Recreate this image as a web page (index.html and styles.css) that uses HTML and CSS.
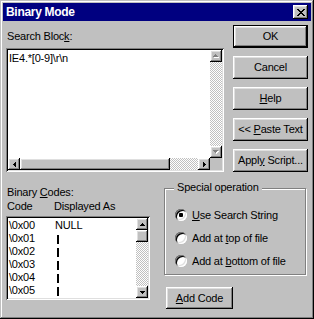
FILE: index.html
```html
<!DOCTYPE html>
<html lang="en">
<head>
    <meta charset="UTF-8">
    <title>Binary Mode</title>
    <link rel="stylesheet" href="styles.css">
</head>
<body>
    <div class="window">
        <div class="titlebar">
            <span class="title">Binary Mode</span>
            <span class="close raised">
                <svg width="8" height="7" viewBox="0 0 8 7"><path d="M0 0h2v1H0zM6 0h2v1H6zM1 1h2v1H1zM5 1h2v1H5zM2 2h4v1H2zM3 3h2v1H3zM2 4h4v1H2zM1 5h2v1H1zM5 5h2v1H5zM0 6h2v1H0zM6 6h2v1H6z"/></svg>
            </span>
        </div>

        <div class="body">
            <div class="top">
                <div class="search">
                    <div class="label">Search Bloc<u>k</u>:</div>
                    <div class="sunken edit">
                        <div class="edit-text">IE4.*[0-9]\r\n</div>
                        <div class="vscroll">
                            <div class="sbtn raised">
                                <svg width="6" height="4" viewBox="0 0 6 4"><path fill="#fff" d="M3 1h1v1H3zM2 2h3v1H2zM1 3h5v1H1z"/><path fill="#808080" d="M2 0h1v1H2zM1 1h3v1H1zM0 2h5v1H0z"/></svg>
                            </div>
                            <div class="track"></div>
                            <div class="sbtn raised">
                                <svg width="6" height="4" viewBox="0 0 6 4"><path fill="#fff" d="M1 1h5v1H1zM2 2h3v1H2zM3 3h1v1H3z"/><path fill="#808080" d="M0 0h5v1H0zM1 1h3v1H1zM2 2h1v1H2z"/></svg>
                            </div>
                        </div>
                        <div class="hscroll">
                            <div class="sbtn raised">
                                <svg width="3" height="5" viewBox="0 0 3 5"><path d="M0 2h1v1H0zM1 1h1v3H1zM2 0h1v5H2z"/></svg>
                            </div>
                            <div class="hthumb raised"></div>
                            <div class="track"></div>
                            <div class="sbtn raised">
                                <svg width="3" height="5" viewBox="0 0 3 5"><path d="M0 0h1v5H0zM1 1h1v3H1zM2 2h1v1H2z"/></svg>
                            </div>
                        </div>
                        <div class="corner"></div>
                    </div>
                </div>

                <div class="buttons">
                    <div class="btn raised default"><span>OK</span></div>
                    <div class="btn raised"><span>Cancel</span></div>
                    <div class="btn raised"><span><u>H</u>elp</span></div>
                    <div class="btn raised"><span>&lt;&lt; <u>P</u>aste Text</span></div>
                    <div class="btn raised"><span>Appl<u>y</u> Script...</span></div>
                </div>
            </div>

            <div class="bottom">
                <div class="codes">
                    <div class="label-sm">Binary <u>C</u>odes:</div>
                    <div class="label-sm cols"><span class="col-code">Code</span><span>Displayed As</span></div>
                    <div class="sunken listbox">
                        <div class="rows">
                            <div class="row"><span class="col-code">\0x00</span><span>NULL</span></div>
                            <div class="row"><span class="col-code">\0x01</span><span class="bar"></span></div>
                            <div class="row"><span class="col-code">\0x02</span><span class="bar"></span></div>
                            <div class="row"><span class="col-code">\0x03</span><span class="bar"></span></div>
                            <div class="row"><span class="col-code">\0x04</span><span class="bar"></span></div>
                            <div class="row"><span class="col-code">\0x05</span><span class="bar"></span></div>
                        </div>
                        <div class="vscroll">
                            <div class="sbtn raised">
                                <svg width="5" height="3" viewBox="0 0 5 3"><path d="M2 0h1v1H2zM1 1h3v1H1zM0 2h5v1H0z"/></svg>
                            </div>
                            <div class="vthumb raised"></div>
                            <div class="track"></div>
                            <div class="sbtn raised">
                                <svg width="5" height="3" viewBox="0 0 5 3"><path d="M0 0h5v1H0zM1 1h3v1H1zM2 2h1v1H2z"/></svg>
                            </div>
                        </div>
                    </div>
                </div>

                <div class="special">
                    <div class="group">
                        <div class="group-title">Special operation</div>
                        <div class="options">
                            <div class="option"><span class="radio checked"></span><span><u>U</u>se Search String</span></div>
                            <div class="option"><span class="radio"></span><span>Add at <u>t</u>op of file</span></div>
                            <div class="option"><span class="radio"></span><span>Add at <u>b</u>ottom of file</span></div>
                        </div>
                    </div>
                    <div class="btn raised add"><span><u>A</u>dd Code</span></div>
                </div>
            </div>
        </div>
    </div>
</body>
</html>
```

FILE: styles.css
```css
* { box-sizing: border-box; }
body { margin: 0; background: #c0c0c0; font-family: "Liberation Sans", Arial, sans-serif; font-size: 11px; letter-spacing: -0.2px; color: #000; }
u { text-decoration-thickness: 1px; text-underline-offset: 1px; }

/* window frame */
.window { width: 314px; height: 319px; padding: 3px; background: #c0c0c0;
    box-shadow: inset -1px -1px #000, inset 1px 1px #c0c0c0, inset -2px -2px #808080, inset 2px 2px #fff; }
.titlebar { height: 18px; display: flex; align-items: center; padding: 0 3px; background: #000080; color: #fff; }
.title { font-weight: bold; font-size: 12px; letter-spacing: -0.3px; }
.close { width: 15px; height: 14px; margin-left: auto; display: flex; align-items: center; justify-content: center; padding-left: 1px; }

/* bevels */
.raised { background: #c0c0c0; box-shadow: inset -1px -1px #000, inset 1px 1px #fff, inset -2px -2px #808080, inset 2px 2px #dfdfdf; }
.sunken { background: #fff; padding: 2px; box-shadow: inset 1px 1px #808080, inset -1px -1px #fff, inset 2px 2px #000, inset -2px -2px #dfdfdf; }

.body { padding: 4px 3px 0 3px; }
.top { display: flex; gap: 9px; }
.search { width: 218px; padding-top: 5px; }
.label { line-height: 13px; margin: 0 0 5px 1px; }

/* edit box with scrollbars */
.edit { height: 124px; display: grid; grid-template-columns: 1fr 12px; grid-template-rows: 1fr 12px; }
.edit-text { padding: 2px 0 0 1px; line-height: 13px; }
.vscroll { display: flex; flex-direction: column; }
.hscroll { display: flex; }
.sbtn { width: 12px; height: 12px; flex: none; display: flex; align-items: center; justify-content: center; }
.sbtn svg { display: block; }
.track { flex: 1; background: repeating-conic-gradient(#fff 0 25%, #c0c0c0 0 50%) 0 0 / 2px 2px; }
.hthumb { width: 150px; height: 12px; flex: none; }
.vthumb { width: 12px; height: 12px; flex: none; }
.corner { background: #c0c0c0; }

/* right-hand buttons */
.buttons { width: 75px; display: flex; flex-direction: column; gap: 8px; }
.btn { height: 23px; display: flex; align-items: center; justify-content: center; padding-bottom: 1px; white-space: nowrap; }
.btn.default { border: 1px solid #000; }

/* lower half */
.bottom { display: flex; gap: 14px; margin-top: 13px; }
.codes { width: 144px; }
.label-sm { line-height: 14px; padding-left: 1px; }
.cols { display: flex; }
.col-code { width: 47px; flex: none; }
.listbox { height: 84px; margin-top: 3px; display: grid; grid-template-columns: 1fr 12px; }
.rows { padding: 1px 0 0 1px; }
.row { display: flex; align-items: flex-start; height: 13px; line-height: 13px; }
.row .col-code { width: 46px; }
.bar { width: 2px; height: 9px; background: #000; margin: 3px 0 0 2px; }

.special { width: 143px; }
.group { margin-top: 3px; width: 142px; height: 87px; border: 1px solid #808080; box-shadow: inset 1px 1px #fff, 1px 1px #fff; }
.group-title { width: max-content; margin: -8px 0 0 9px; padding: 0 3px; line-height: 13px; background: #c0c0c0; }
.options { margin-top: 9px; }
.option { height: 23px; display: flex; align-items: center; gap: 5px; padding-left: 10px; }
.radio { width: 12px; height: 12px; flex: none; border-radius: 50%; background: #fff; display: flex; align-items: center; justify-content: center;
    box-shadow: inset 1px 1px #808080, inset -1px -1px #fff, inset 2px 2px #000, inset -2px -2px #dfdfdf; }
.radio.checked::after { content: ""; width: 4px; height: 4px; border-radius: 1px; background: #000; }
.add { width: 67px; height: 22px; margin: 12px 0 0 2px; }
```
